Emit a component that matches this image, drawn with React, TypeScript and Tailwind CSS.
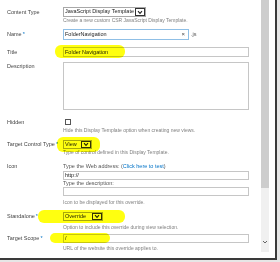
import React from 'react';

const Req = () => <span className="text-[#0072c6] ml-[1px]">*</span>;

const Chevron = () => (
  <svg width="6" height="5" viewBox="0 0 6 5" className="block">
    <path d="M1 1.2 L3 3.4 L5 1.2" stroke="#222" strokeWidth="1.1" fill="none" />
  </svg>
);

const Select: React.FC<{ value: string; w: string; h?: string }> = ({ value, w, h = 'h-[9px]' }) => (
  <div className={`flex items-stretch border border-[#a8a8a8] ${h} ${w}`}>
    <span className="flex-1 pl-[1px] leading-[7px] text-[#222] overflow-hidden whitespace-nowrap">{value}</span>
    <span className="w-[10px] border border-[#333] flex items-center justify-center bg-white">
      <Chevron />
    </span>
  </div>
);

const Help: React.FC<{ mt?: string; children: React.ReactNode }> = ({ mt = 'mt-0', children }) => (
  <div className={`text-[#808080] text-[5px] leading-[7px] whitespace-nowrap ${mt}`}>{children}</div>
);

const Row: React.FC<{ label: React.ReactNode; mt: string; lt: string; children: React.ReactNode }> = ({ label, mt, lt, children }) => (
  <div className={`flex ${mt}`}>
    <div className={`w-[63px] pl-[7px] text-[#444] whitespace-nowrap ${lt}`}>{label}</div>
    <div className="flex-1">{children}</div>
  </div>
);

const Mark: React.FC<{ cls: string }> = ({ cls }) => (
  <div className={`absolute bg-[#ffff10] mix-blend-multiply rounded-[6px] blur-[0.5px] ${cls}`} />
);

export default function App() {
  return (
    <div className="w-[280px] h-[262px] bg-[#e6e6e6] overflow-hidden relative" style={{ fontFamily: '"Liberation Sans", Arial, sans-serif' }}>
      <div className="w-[277px] h-[260px] bg-[#3a3a3a] pr-[2px] pb-[2px]">
        <div className="w-[275px] h-[258px] bg-white flex text-[5.5px] leading-[7px] relative">
          <div className="flex-1 pt-[7px] pr-[12px]">
            <Row label="Content Type" mt="mt-0" lt="pt-[1.5px]">
              <Select value="JavaScript Display Template" w="w-[83px]" h="h-[10px]" />
              <Help>Create a new custom CSR JavaScript Display Template.</Help>
            </Row>
            <Row label={<>Name<Req /></>} mt="mt-[5px]" lt="pt-[2px]">
              <div className="flex items-center">
                <div className="w-[126px] h-[11px] border border-[#8fbfe6] flex items-center px-[1px]">
                  <span className="flex-1 text-[#222]">FolderNavigation</span>
                  <span className="text-[#444] text-[6px] mr-[2px]">×</span>
                </div>
                <span className="ml-[2px] text-[#555]">.js</span>
              </div>
            </Row>
            <Row label="Title" mt="mt-[7px]" lt="pt-[1.5px]">
              <div className="h-[10px] border border-[#c6c6c6] px-[1px] leading-[8px] text-[#222]">Folder Navigation</div>
            </Row>
            <Row label="Description" mt="mt-[5px]" lt="pt-[0.5px]">
              <div className="h-[48px] border border-[#c6c6c6]" />
            </Row>
            <Row label="Hidden" mt="mt-[9px]" lt="pt-0">
              <div className="ml-[2px] w-[6px] h-[6px] border border-[#555]" />
              <Help mt="mt-[2px]">Hide this Display Template option when creating new views.</Help>
            </Row>
            <Row label={<>Target Control Type<Req /></>} mt="mt-[6px]" lt="pt-[1px]">
              <Select value="View" w="w-[29px]" />
              <Help>Type of control defined in this Display Template.</Help>
            </Row>
            <Row label="Icon" mt="mt-[7px]" lt="pt-0">
              <div className="text-[#555] whitespace-nowrap leading-[7px]">
                Type the Web address: (<span className="text-[#0072c6]">Click here to test</span>)
              </div>
              <div className="h-[9px] mt-[1px] border border-[#c6c6c6] px-[1px] leading-[7px] text-[#222]">http://</div>
              <div className="text-[#555] leading-[7px]">Type the description:</div>
              <div className="h-[9px] border border-[#c6c6c6]" />
              <Help mt="mt-[3px]">Icon to be displayed for this override.</Help>
            </Row>
            <Row label={<>Standalone<Req /></>} mt="mt-[6px]" lt="pt-[1px]">
              <Select value="Override" w="w-[40px]" />
              <Help mt="mt-[3px]">Option to include this override during view selection.</Help>
            </Row>
            <Row label={<>Target Scope<Req /></>} mt="mt-[3px]" lt="pt-[1px]">
              <div className="h-[9px] border border-[#c6c6c6] px-[1px] leading-[7px] text-[#222]">/</div>
              <Help mt="mt-[2px]">URL of the website this override applies to.</Help>
            </Row>
          </div>
          <div className="w-[8px] h-[252px] bg-[#f0f0f0] flex flex-col mr-[6px]">
            <div className="h-[188px] bg-[#cdcdcd]" />
            <div className="flex-1 flex items-end justify-center pb-[8px]">
              <svg width="6" height="4" viewBox="0 0 6 4"><path d="M1 1 L3 3 L5 1" stroke="#666" strokeWidth="1" fill="none" /></svg>
            </div>
          </div>
          <Mark cls="left-[55px] top-[45px] w-[70px] h-[13px]" />
          <Mark cls="left-[57px] top-[137px] w-[43px] h-[15px]" />
          <Mark cls="left-[38px] top-[210px] w-[87px] h-[13px]" />
          <Mark cls="left-[50px] top-[233px] w-[60px] h-[10px]" />
        </div>
      </div>
    </div>
  );
}
